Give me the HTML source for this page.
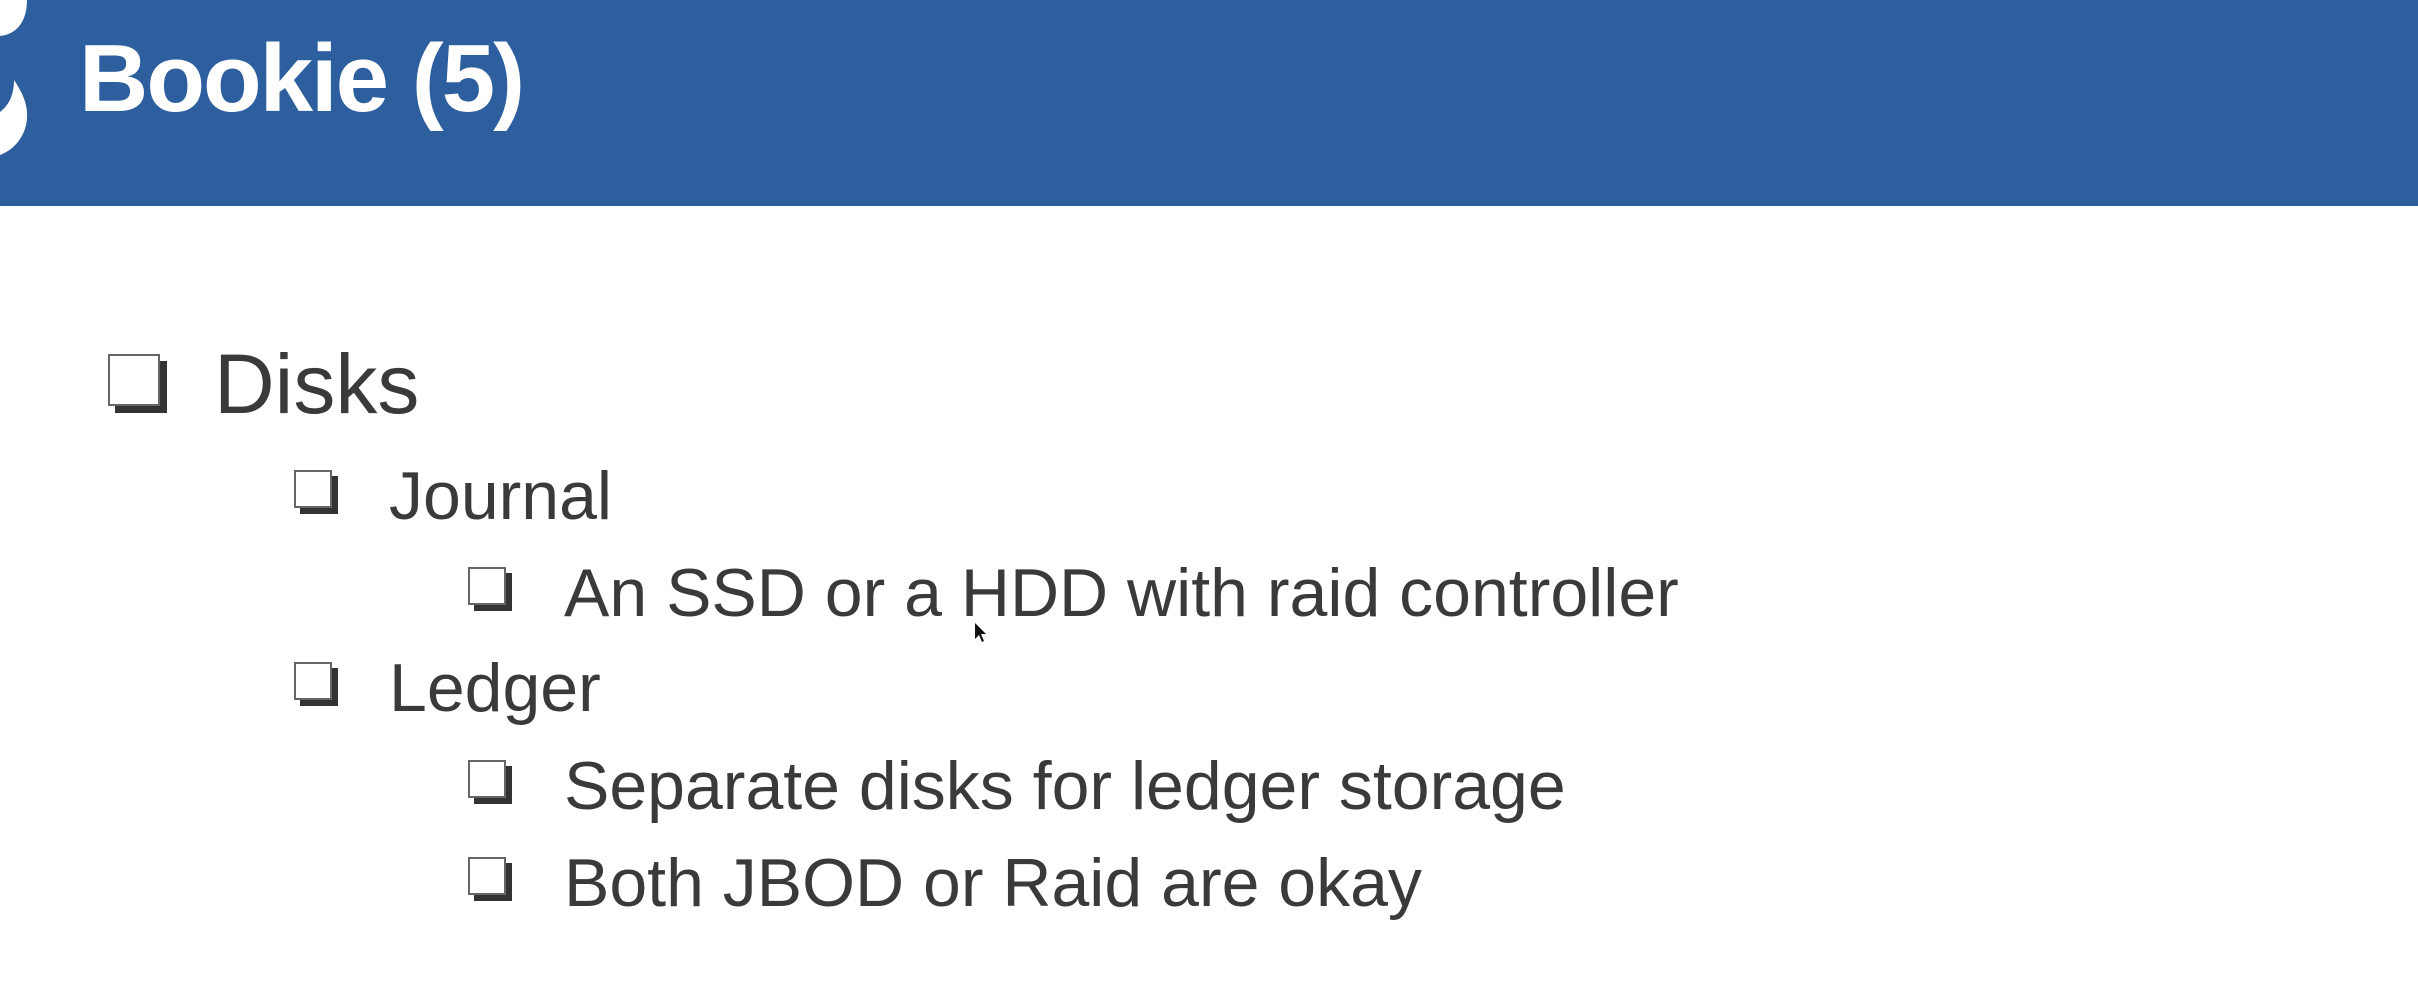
<!DOCTYPE html>
<html><head><meta charset="utf-8"><style>
html,body{margin:0;padding:0;width:2418px;height:984px;overflow:hidden;background:#fff;position:relative;font-family:"Liberation Sans",sans-serif}
.hdr{position:absolute;left:0;top:0;width:2418px;height:206px;background:#2d5f9f}
.t{position:absolute;line-height:1;white-space:nowrap;color:#3a3a3a}
.title{color:#fff;font-weight:bold;font-size:96px;left:79px;top:31px;letter-spacing:-2px}
.b{position:absolute;background:#fff;border:2px solid #666;box-sizing:border-box}
.b1{width:52px;height:52px;box-shadow:7px 7px 0 #333}
.b2{width:38px;height:38px;box-shadow:6px 6px 0 #333}
.l1{font-size:84px}
.l2{font-size:68px}
</style></head><body>
<div class="hdr"></div>
<svg style="position:absolute;left:0;top:0" width="40" height="170" viewBox="0 0 40 170">
<path d="M0 0 L27 0 C27 20 18 34 0 36 Z" fill="#fff"/>
<path d="M14 80 C22 92 28 104 27 118 C26 136 14 150 0 155 L0 112 C8 106 14 96 14 80 Z" fill="#fff"/>
</svg>
<div class="t title">Bookie (5)</div>

<div class="b b1" style="left:108px;top:354px"></div>
<div class="t l1" style="left:214px;top:342px">Disks</div>

<div class="b b2" style="left:294px;top:470px"></div>
<div class="t l2" style="left:389px;top:462px">Journal</div>

<div class="b b2" style="left:468px;top:567px"></div>
<div class="t l2" style="left:564px;top:559px">An SSD or a HDD with raid controller</div>

<div class="b b2" style="left:294px;top:662px"></div>
<div class="t l2" style="left:389px;top:654px">Ledger</div>

<div class="b b2" style="left:468px;top:760px"></div>
<div class="t l2" style="left:564px;top:752px">Separate disks for ledger storage</div>

<div class="b b2" style="left:468px;top:857px"></div>
<div class="t l2" style="left:564px;top:849px">Both JBOD or Raid are okay</div>

<svg style="position:absolute;left:974px;top:622px" width="16" height="24" viewBox="0 0 16 24"><path d="M1 1 L1 17 L5 13 L8 20 L10 19 L7 12 L12 12 Z" fill="#111"/></svg>
</body></html>
